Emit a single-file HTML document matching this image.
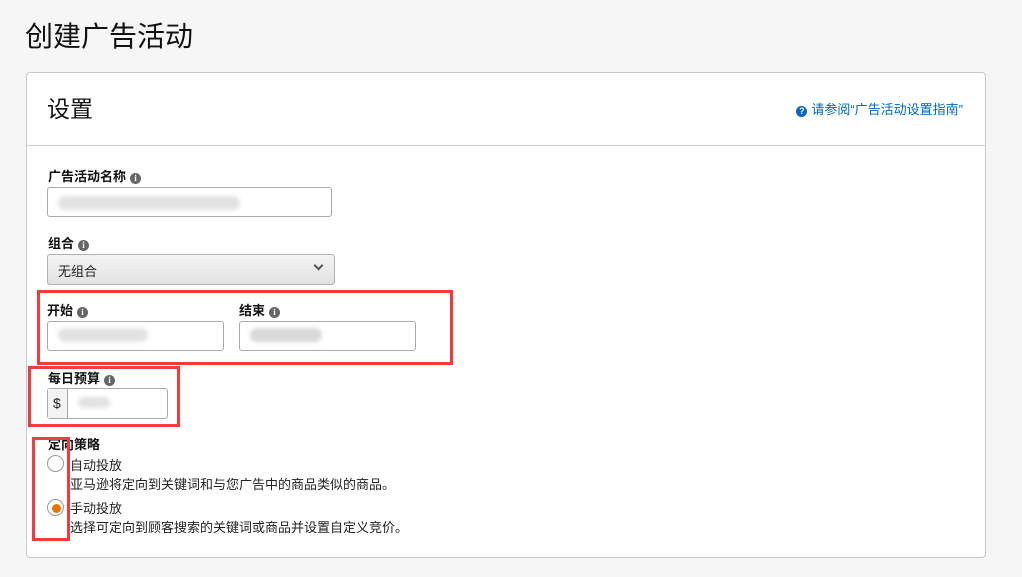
<!DOCTYPE html>
<html><head><meta charset="utf-8"><style>
*{box-sizing:border-box;margin:0;padding:0}
body{width:1022px;height:577px;background:#f6f6f6;font-family:"Liberation Sans","Noto Sans CJK SC",sans-serif;color:#111;position:relative;overflow:hidden}
.abs{position:absolute}
h1{position:absolute;left:25px;top:15px;font-size:28px;font-weight:400;color:#111}
.card{position:absolute;left:26px;top:72px;width:960px;height:486px;background:#fff;border:1px solid #c8c8c8;border-radius:4px}
.hd{height:73px;border-bottom:1px solid #d0d0d0;position:relative}
.hd .t{position:absolute;left:20px;top:17px;font-size:23px;color:#111}
.hd .l{position:absolute;right:22px;top:26px;font-size:13px;color:#0066c0}
.lbl{position:absolute;font-size:13px;font-weight:700;color:#111}
.i{display:inline-block;width:11px;height:11px;border-radius:50%;background:#666;color:#fff;font-size:9px;text-align:center;line-height:11px;font-weight:700;vertical-align:0px;margin-left:4px;font-family:"Liberation Serif",serif}
.inp{position:absolute;height:31px;border:1px solid #aaa;border-radius:3px;background:#fff}
.blur{position:absolute;height:14px;background:#e2e2e2;border-radius:7px;filter:blur(2px)}
.red{position:absolute;border:3px solid #f03c3c}
.rad{position:absolute;width:17px;height:17px;border-radius:50%;border:1px solid #999;background:#fff}
.txt{position:absolute;font-size:13px;color:#222}
</style></head><body>
<h1>创建广告活动</h1>
<div class="card"><div class="hd"><div class="t">设置</div><div class="l"><span style="display:inline-block;width:11px;height:11px;border-radius:50%;background:#0066c0;color:#fff;font-size:9px;line-height:11px;text-align:center;font-weight:700;margin-right:4px">?</span>请参阅“广告活动设置指南”</div></div></div>

<div class="lbl" style="left:48px;top:166px">广告活动名称<span class="i">i</span></div>
<div class="inp" style="left:47px;top:187px;width:285px;height:30px"></div>
<div class="blur" style="left:58px;top:196px;width:182px"></div>

<div class="lbl" style="left:48px;top:233px">组合<span class="i">i</span></div>
<div class="inp" style="left:47px;top:254px;width:288px;background:linear-gradient(#f4f4f4,#e2e2e2);border-color:#adb1b8"></div>
<div class="txt" style="left:58px;top:261px;font-size:13px">无组合</div>
<div class="abs" style="left:315px;top:262px;width:7px;height:7px;border-right:2px solid #555;border-bottom:2px solid #555;transform:rotate(45deg)"></div>

<div class="lbl" style="left:47px;top:300px">开始<span class="i">i</span></div>
<div class="lbl" style="left:239px;top:300px">结束<span class="i">i</span></div>
<div class="inp" style="left:47px;top:321px;width:177px;height:30px"></div>
<div class="inp" style="left:239px;top:321px;width:177px;height:30px"></div>
<div class="blur" style="left:58px;top:328px;width:90px"></div>
<div class="blur" style="left:250px;top:328px;width:72px;background:#d8d8d8"></div>
<div class="red" style="left:37px;top:290px;width:416px;height:75px"></div>

<div class="lbl" style="left:48px;top:368px">每日预算<span class="i">i</span></div>
<div class="inp" style="left:47px;top:388px;width:121px;height:31px"></div>
<div class="abs" style="left:48px;top:389px;width:20px;height:29px;background:#f3f3f3;border-right:1px solid #aaa"></div>
<div class="txt" style="left:53px;top:395px;font-size:14px">$</div>
<div class="blur" style="left:78px;top:397px;width:32px;height:11px"></div>
<div class="red" style="left:28px;top:366px;width:152px;height:61px"></div>

<div class="lbl" style="left:48px;top:434px">定向策略</div>
<div class="rad" style="left:47px;top:455px"></div>
<div class="txt" style="left:70px;top:455px">自动投放</div>
<div class="txt" style="left:70px;top:474px">亚马逊将定向到关键词和与您广告中的商品类似的商品。</div>
<div class="rad" style="left:47px;top:499px"></div>
<div class="abs" style="left:52px;top:504px;width:9px;height:9px;border-radius:50%;background:#e77600"></div>
<div class="txt" style="left:70px;top:498px">手动投放</div>
<div class="txt" style="left:70px;top:517px">选择可定向到顾客搜索的关键词或商品并设置自定义竞价。</div>
<div class="red" style="left:32px;top:437px;width:38px;height:104px"></div>
</body></html>
